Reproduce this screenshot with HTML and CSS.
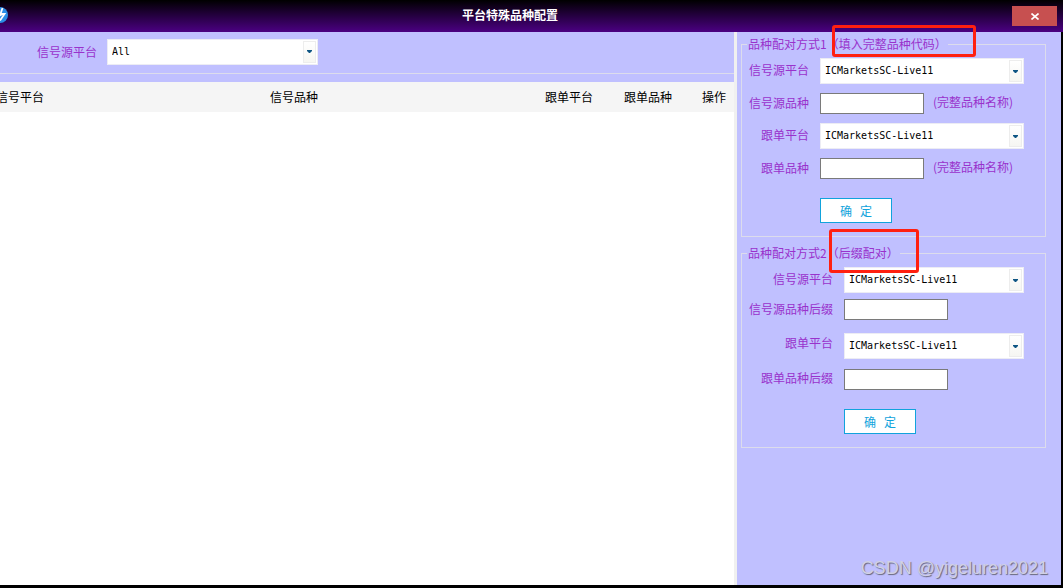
FILE: index.html
```html
<!DOCTYPE html>
<html lang="zh-CN">
<head>
<meta charset="utf-8">
<title>平台特殊品种配置</title>
<link rel="stylesheet" href="styles.css">
</head>
<body>
<div class="window">
  <header class="titlebar">
    <svg class="app-icon" viewBox="0 0 8 18" width="8" height="18" aria-hidden="true">
      <circle cx="0" cy="9" r="8" fill="#2b8ee6"/>
      <path d="M2.5 2 L0.5 8 H4.5 L0 14.5 M0 9.5 L1.5 9" fill="none" stroke="#fff" stroke-width="1.8"/>
    </svg>
    <h1 class="title">平台特殊品种配置</h1>
    <button class="close" type="button" aria-label="关闭">
      <svg viewBox="0 0 8 7" width="8" height="7" aria-hidden="true"><path d="M0.5 0.5 L7.5 6.5 M7.5 0.5 L0.5 6.5" stroke="#fff" stroke-width="1.6"/></svg>
    </button>
  </header>
  <div class="content">
    <main class="list-pane">
      <div class="toolbar">
        <label for="filter">信号源平台</label>
        <span class="combo combo-filter">
          <select id="filter"><option>All</option></select>
          <span class="combo-arrow"><svg viewBox="0 0 5 3" width="5" height="3" aria-hidden="true"><path d="M0 0H5V1L3 3H2L0 1Z" fill="#0f5684"/></svg></span>
        </span>
      </div>
      <div class="toolbar-edge"></div>
      <table class="pairs">
        <thead>
          <tr><th class="col-source">信号平台</th><th>信号品种</th><th class="col-target">跟单平台</th><th class="col-symbol">跟单品种</th><th class="col-action">操作</th></tr>
        </thead>
        <tbody></tbody>
      </table>
    </main>
    <aside class="side-pane">
      <fieldset class="group">
        <legend>品种配对方式1（填入完整品种代码）<span class="mark mark-full"></span></legend>
        <div class="row">
          <label for="src1">信号源平台</label>
          <span class="combo">
            <select id="src1"><option>ICMarketsSC-Live11</option></select>
            <span class="combo-arrow"><svg viewBox="0 0 5 3" width="5" height="3" aria-hidden="true"><path d="M0 0H5V1L3 3H2L0 1Z" fill="#0f5684"/></svg></span>
          </span>
        </div>
        <div class="row">
          <label for="srcSym1">信号源品种</label>
          <input id="srcSym1" type="text"><span class="hint">(完整品种名称)</span>
        </div>
        <div class="row">
          <label for="dst1">跟单平台</label>
          <span class="combo">
            <select id="dst1"><option>ICMarketsSC-Live11</option></select>
            <span class="combo-arrow"><svg viewBox="0 0 5 3" width="5" height="3" aria-hidden="true"><path d="M0 0H5V1L3 3H2L0 1Z" fill="#0f5684"/></svg></span>
          </span>
        </div>
        <div class="row">
          <label for="dstSym1">跟单品种</label>
          <input id="dstSym1" type="text"><span class="hint">(完整品种名称)</span>
        </div>
        <div class="row row-submit"><button class="submit" type="button"><span>确</span><span>定</span></button></div>
      </fieldset>
      <fieldset class="group group-suffix">
        <legend>品种配对方式2（后缀配对）<span class="mark mark-suffix"></span></legend>
        <div class="row">
          <label for="src2">信号源平台</label>
          <span class="combo">
            <select id="src2"><option>ICMarketsSC-Live11</option></select>
            <span class="combo-arrow"><svg viewBox="0 0 5 3" width="5" height="3" aria-hidden="true"><path d="M0 0H5V1L3 3H2L0 1Z" fill="#0f5684"/></svg></span>
          </span>
        </div>
        <div class="row">
          <label for="srcSuf">信号源品种后缀</label>
          <input id="srcSuf" type="text">
        </div>
        <div class="row row-target">
          <label for="dst2">跟单平台</label>
          <span class="combo">
            <select id="dst2"><option>ICMarketsSC-Live11</option></select>
            <span class="combo-arrow"><svg viewBox="0 0 5 3" width="5" height="3" aria-hidden="true"><path d="M0 0H5V1L3 3H2L0 1Z" fill="#0f5684"/></svg></span>
          </span>
        </div>
        <div class="row row-target-suffix">
          <label for="dstSuf">跟单品种后缀</label>
          <input id="dstSuf" type="text">
        </div>
        <div class="row row-submit"><button class="submit" type="button"><span>确</span><span>定</span></button></div>
      </fieldset>
      <p class="watermark">CSDN @yigeluren2021</p>
    </aside>
  </div>
</div>
</body>
</html>
```
FILE: styles.css
```css
* { box-sizing: border-box; }

body {
  margin: 0;
  background: #000;
  font: 12px/16px "Noto Sans CJK SC", sans-serif;
  color: #000;
}

.window {
  display: flex;
  flex-direction: column;
  min-height: 100vh;
  padding-bottom: 3px;
}

.titlebar {
  display: flex;
  align-items: flex-start;
  height: 32px;
  padding: 6px 6px 0 0;
  background: linear-gradient(#000, #4b0082);
}

.app-icon { flex: none; display: block; }

.title {
  flex: 1;
  margin: 0;
  font-size: 12px;
  line-height: 18px;
  font-weight: 700;
  text-align: center;
  color: #fff;
}

.close {
  display: flex;
  align-items: center;
  justify-content: center;
  width: 45px;
  height: 20px;
  padding: 0;
  border: 0;
  background: #c75050;
}

.content {
  flex: 1;
  display: flex;
  padding-right: 2px;
}

.list-pane {
  flex: 1;
  min-width: 0;
  overflow: hidden;
  background: #fff;
}

.toolbar {
  display: flex;
  align-items: center;
  gap: 10px;
  height: 42px;
  padding: 0 0 2px 37px;
  border-bottom: 1px solid #dcdcec;
  background: #c0c0ff;
  color: #9932cc;
}

.toolbar-edge { height: 8px; background: #c0c0ff; }

.pairs {
  width: 100%;
  table-layout: fixed;
  border-collapse: collapse;
}

.pairs th {
  height: 30px;
  padding: 0;
  background: #f5f5f5;
  font-weight: 400;
  text-align: left;
  white-space: nowrap;
}

.pairs .col-source { width: 270px; text-indent: -4px; }
.col-target { width: 79px; }
.col-symbol { width: 78px; }
.col-action { width: 32px; }

.side-pane {
  display: flex;
  flex-direction: column;
  width: 327px;
  padding: 4px 15px 0 4px;
  border-left: 3px solid #f0f0f0;
  background: #c0c0ff;
  color: #9932cc;
}

.group {
  --label-width: 67px;
  --row-gap: 9px;
  display: flex;
  flex-direction: column;
  gap: var(--row-gap);
  min-width: 0;
  margin: 0 0 8px;
  padding: 6px 21px 13px 0;
  border: 1px solid #dcdcec;
}

.group-suffix {
  --label-width: 91px;
  --row-gap: 6px;
}

.group legend {
  position: relative;
  margin-left: 5px;
  padding: 0 1px;
}

.mark {
  position: absolute;
  z-index: 2;
  border: 3px solid #ff2010;
  border-radius: 3px;
  pointer-events: none;
}

.mark-full { left: 85px; top: -11px; width: 144px; height: 32px; }
.mark-suffix { left: 82px; top: -16px; width: 90px; height: 44px; }

.row { display: flex; align-items: center; }

.row label {
  width: var(--label-width);
  padding-bottom: 2px;
  text-align: right;
  white-space: nowrap;
}

.row input {
  width: 104px;
  height: 21px;
  margin-left: 11px;
  padding: 0 3px;
  border: 1px solid #7a7a7a;
  background: #fff;
  font: inherit;
}

.hint { margin-left: 9px; padding-bottom: 3px; white-space: nowrap; }

.row-submit { margin-top: 10px; padding-left: calc(var(--label-width) + 11px); }
.row-target { margin-top: 7px; }
.row-target label { padding-bottom: 7px; }
.row-target-suffix { margin-top: 4px; }
.row-target-suffix label { padding-bottom: 4px; }
.group-suffix .row-submit { margin-top: 13px; }

.submit {
  display: flex;
  align-items: center;
  justify-content: center;
  gap: 8px;
  width: 72px;
  height: 25px;
  padding: 0;
  border: 1px solid #11a3dc;
  background: #fff;
  color: #11a3dc;
  font: 12px/16px "Noto Sans CJK SC", sans-serif;
}

.combo { position: relative; display: flex; height: 26px; }
.row .combo { flex: 1; margin-left: 11px; }
.combo-filter { width: 211px; }

.combo select {
  width: 100%;
  height: 26px;
  padding: 0 20px 0 4px;
  border: 1px solid #ececf4;
  border-radius: 0;
  appearance: none;
  background: #fff;
  color: #000;
  font: 10px/16px "DejaVu Sans Mono", monospace;
}

.combo-arrow {
  position: absolute;
  top: 2px;
  right: 2px;
  bottom: 2px;
  display: flex;
  align-items: center;
  justify-content: center;
  width: 13px;
  border: 1px solid #ededed;
  background: linear-gradient(#fff, #f6f6f2);
  pointer-events: none;
}

.watermark {
  margin: auto -2px 5px auto;
  font: 18px/24px "Liberation Sans", sans-serif;
  color: #d0d0e4;
  text-shadow: 1px 1px 1px #66667a;
}
```
